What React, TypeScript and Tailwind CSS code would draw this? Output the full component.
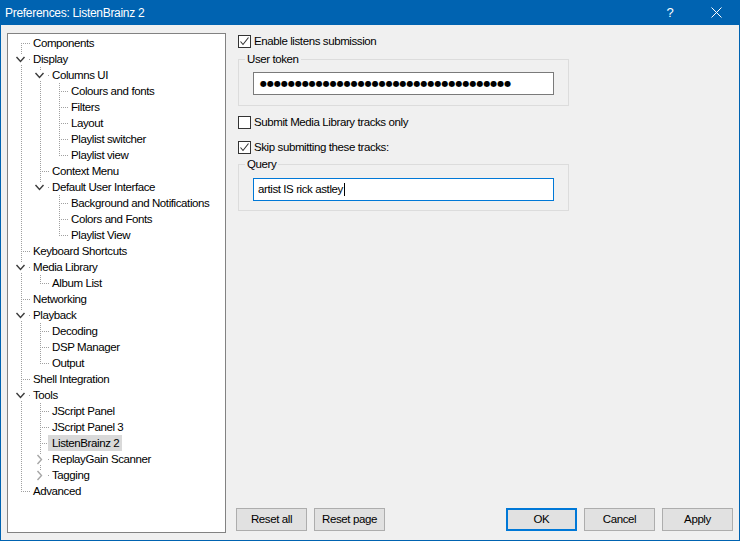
import { Fragment } from 'react';

type Node = {
  label: string;
  level: number;
  exp?: 'open' | 'closed';
  selected?: boolean;
};

const TREE: Node[] = [
  { label: 'Components', level: 0 },
  { label: 'Display', level: 0, exp: 'open' },
  { label: 'Columns UI', level: 1, exp: 'open' },
  { label: 'Colours and fonts', level: 2 },
  { label: 'Filters', level: 2 },
  { label: 'Layout', level: 2 },
  { label: 'Playlist switcher', level: 2 },
  { label: 'Playlist view', level: 2 },
  { label: 'Context Menu', level: 1 },
  { label: 'Default User Interface', level: 1, exp: 'open' },
  { label: 'Background and Notifications', level: 2 },
  { label: 'Colors and Fonts', level: 2 },
  { label: 'Playlist View', level: 2 },
  { label: 'Keyboard Shortcuts', level: 0 },
  { label: 'Media Library', level: 0, exp: 'open' },
  { label: 'Album List', level: 1 },
  { label: 'Networking', level: 0 },
  { label: 'Playback', level: 0, exp: 'open' },
  { label: 'Decoding', level: 1 },
  { label: 'DSP Manager', level: 1 },
  { label: 'Output', level: 1 },
  { label: 'Shell Integration', level: 0 },
  { label: 'Tools', level: 0, exp: 'open' },
  { label: 'JScript Panel', level: 1 },
  { label: 'JScript Panel 3', level: 1 },
  { label: 'ListenBrainz 2', level: 1, selected: true },
  { label: 'ReplayGain Scanner', level: 1, exp: 'closed' },
  { label: 'Tagging', level: 1, exp: 'closed' },
  { label: 'Advanced', level: 0 },
];

const INDENT = ['pl-[21px]', 'pl-[40px]', 'pl-[59px]'];

const cy = (i: number) => 9 + 16 * i;
const lx = (l: number) => 13 + 19 * l + 0.5;

// dotted connector lines, chevrons drawn on top
function TreeLines() {
  return (
    <svg className="absolute left-0 top-0" width={217} height={498}>
      {TREE.map((n, i) => {
        let top = cy(i);
        for (let k = i - 1; k >= 0; k--) {
          if (TREE[k].level === n.level) {
            top = cy(k);
            break;
          }
          if (TREE[k].level < n.level) {
            top = cy(k) + 8;
            break;
          }
        }
        const x = lx(n.level);
        const y = cy(i) + 0.5;
        return (
          <Fragment key={i}>
            <line x1={x} y1={top} x2={x} y2={cy(i) + 1} stroke="#a0a0a0" strokeDasharray="1 1" />
            <line x1={13 + 19 * n.level} y1={y} x2={23 + 19 * n.level} y2={y} stroke="#a0a0a0" strokeDasharray="1 1" />
          </Fragment>
        );
      })}
      {TREE.map((n, i) => {
        if (!n.exp) return null;
        const o = 19 * n.level;
        const c = cy(i);
        return (
          <Fragment key={'c' + i}>
            <rect x={7 + o} y={c - 5} width={13} height={11} fill="#fff" />
            {n.exp === 'open' ? (
              <polyline
                points={`${8.5 + o},${c - 2} ${12.5 + o},${c + 2.5} ${16.5 + o},${c - 2}`}
                fill="none"
                stroke="#3c3c3c"
                strokeWidth={1.4}
              />
            ) : (
              <polyline
                points={`${10.5 + o},${c - 4} ${14.5 + o},${c + 0.5} ${10.5 + o},${c + 5}`}
                fill="none"
                stroke="#a6a6a6"
                strokeWidth={1.4}
              />
            )}
          </Fragment>
        );
      })}
    </svg>
  );
}

function Check({ checked }: { checked?: boolean }) {
  return (
    <span className="w-[13px] h-[13px] border border-[#333333] bg-white flex items-center justify-center shrink-0">
      {checked && (
        <svg width="11" height="11" viewBox="0 0 11 11">
          <polyline points="1.5,5.5 4,8.5 9.5,1.5" fill="none" stroke="#333333" strokeWidth="1.1" />
        </svg>
      )}
    </span>
  );
}

function CheckRow({ label, checked, className }: { label: string; checked?: boolean; className?: string }) {
  return (
    <div className={`flex items-center h-[16px] gap-[3px] ${className ?? ''}`}>
      <Check checked={checked} />
      <span className="leading-[16px]">{label}</span>
    </div>
  );
}

function Btn({ label, primary }: { label: string; primary?: boolean }) {
  return (
    <button
      className={`w-[71px] h-[23px] bg-[#e1e1e1] flex items-center justify-center leading-none ${
        primary ? 'border-2 border-[#0078d7]' : 'border border-[#adadad]'
      }`}
    >
      {label}
    </button>
  );
}

export default function App() {
  return (
    <div
      className="w-[740px] h-[541px] bg-[#0063b1] flex flex-col px-[1px] pb-[1px] text-[11.5px] tracking-[-0.4px] text-[#000]"
      style={{ fontFamily: '"Liberation Sans", Arial, sans-serif' }}
    >
      {/* title bar */}
      <div className="h-[25px] flex items-center text-white text-[12px] tracking-[-0.3px]">
        <span className="pl-[4px] flex-1">Preferences: ListenBrainz 2</span>
        <span className="w-[46px] text-center text-[13px]">?</span>
        <span className="w-[46px] flex justify-center">
          <svg width="11" height="11" viewBox="0 0 11 11">
            <path d="M0.5 0.5L10.5 10.5M10.5 0.5L0.5 10.5" stroke="#fff" strokeWidth="1" />
          </svg>
        </span>
      </div>

      {/* body */}
      <div className="flex-1 bg-[#f0f0f0] flex">
        <div className="ml-[6px] mt-[8px] w-[219px] h-[500px] border border-[#828282] bg-white relative pt-[1px]">
          <TreeLines />
          {TREE.map((n, i) => (
            <div key={i} className={`relative h-[16px] flex items-center ${INDENT[n.level]}`}>
              <span className={`pl-[4px] pr-[3px] leading-[16px] ${n.selected ? 'bg-[#d9d9d9]' : ''}`}>{n.label}</span>
            </div>
          ))}
        </div>

        <div className="flex-1 flex flex-col">
          <div className="pl-[12px] pt-[8px] flex flex-col">
            <CheckRow label="Enable listens submission" checked />
            <fieldset className="mt-[3px] w-[331px] border border-[#dcdcdc] pt-[6px] pb-[10px]">
              <legend className="ml-[6px] px-[2px] leading-[14px]">User token</legend>
              <div className="ml-[14px] w-[301px] h-[23px] border border-[#7a7a7a] bg-white flex items-center pl-[6px]">
                <span
                  className="text-[8px] tracking-[0px] leading-none"
                  style={{ fontFamily: '"DejaVu Sans", sans-serif' }}
                >
                  {'●'.repeat(36)}
                </span>
              </div>
            </fieldset>
            <CheckRow label="Submit Media Library tracks only" className="mt-[8px]" />
            <CheckRow label="Skip submitting these tracks:" checked className="mt-[9px]" />
            <fieldset className="mt-[2px] w-[331px] border border-[#dcdcdc] pt-[7px] pb-[9px]">
              <legend className="ml-[6px] px-[2px] leading-[14px]">Query</legend>
              <div className="ml-[14px] w-[301px] h-[23px] border border-[#0078d7] bg-white flex items-center pl-[4px]">
                <span className="leading-none">artist IS rick astley</span>
                <span className="w-[1px] h-[13px] bg-black ml-[1px]" />
              </div>
            </fieldset>
          </div>

          <div className="mt-auto flex items-center pl-[10px] pr-[6px] pb-[9px]">
            <div className="flex gap-[7px]">
              <Btn label="Reset all" />
              <Btn label="Reset page" />
            </div>
            <div className="ml-auto flex gap-[7px]">
              <Btn label="OK" primary />
              <Btn label="Cancel" />
              <Btn label="Apply" />
            </div>
          </div>
        </div>
      </div>
    </div>
  );
}
